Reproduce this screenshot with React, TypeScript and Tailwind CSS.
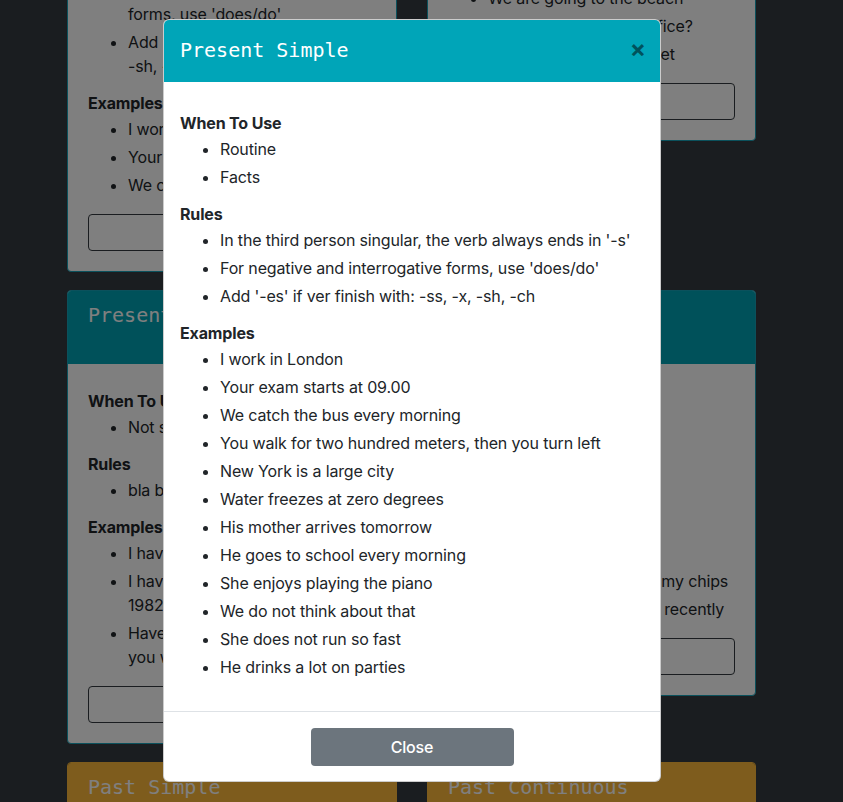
import React from "react";

type Card = {
  title: string;
  color: "info" | "warning";
  when?: React.ReactNode[];
  rules?: React.ReactNode[];
  examples?: React.ReactNode[];
  tight?: boolean;
};

const mono = "font-['DejaVu_Sans_Mono',monospace]";

function Section({ title, items, first }: { title: string; items: React.ReactNode[]; first?: boolean }) {
  return (
    <div className={first ? "" : "mt-[13px]"}>
      <div className="font-bold leading-6 mb-[2px]">{title}</div>
      <ul className="list-disc pl-10">
        {items.map((t, i) => (
          <li key={i} className="leading-6 mb-1">
            {t}
          </li>
        ))}
      </ul>
    </div>
  );
}

function BgCard({ card }: { card: Card }) {
  const info = card.color === "info";
  return (
    <div
      className={`self-start rounded border overflow-hidden bg-white ${
        info ? "border-[#17a2b8]" : "border-[#fcb83a]"
      }`}
    >
      <div className={`h-[73px] px-5 pt-3 ${info ? "bg-[#00a3b5]" : "bg-[#fcb83a]"}`}>
        <div className={`${mono} text-[20px] leading-6 tracking-normal text-white`}>{card.title}</div>
      </div>
      {card.when && (
        <div className={`px-5 pb-5 text-[#212529] ${card.tight ? "pt-[22px]" : "pt-[25px]"}`}>
          <Section title="When To Use" items={card.when} first />
          <Section title="Rules" items={card.rules || []} />
          <Section title="Examples" items={card.examples || []} />
          <button className="mt-[13px] w-full h-[37px] rounded border border-[#343a40] text-[#343a40]">
            Practice
          </button>
        </div>
      )}
    </div>
  );
}

const cards: Card[] = [
  {
    title: "Present Simple",
    color: "info",
    when: ["Routine", "Facts"],
    rules: [
      "In the third person singular, the verb always ends in '-s'",
      "For negative and interrogative forms, use 'does/do'",
      <>
        <span className="whitespace-nowrap">Add '-es' if ver finish with: -ss, -x,</span>
        <br />
        -sh, -ch
      </>,
    ],
    examples: ["I work in London", "Your exam starts at 09.00", "We catch the bus every morning"],
  },
  {
    title: "Present Continuous",
    color: "info",
    tight: true,
    when: ["Actions happening now", "Temporary actions"],
    rules: ["to be + verb-ing"],
    examples: ["We are going to the beach", "Are you going to the office?", "He's walking in the street"],
  },
  {
    title: "Present Perfect",
    color: "info",
    when: ["Not specific time"],
    rules: ["bla bla bla"],
    examples: [
      "I have been to London",
      <>
        I have lived in this city since
        <br />
        1982
      </>,
      "Have you ever seen the film that you wanted?",
    ],
  },
  {
    title: "Present Perfect Continuous",
    color: "info",
    when: ["Actions until now"],
    rules: ["have been + verb-ing"],
    examples: [
      "It has been raining",
      <span className="whitespace-nowrap">Who has been stealing my chips</span>,
      <span className="whitespace-nowrap">I've been watching you recently</span>,
    ],
  },
  { title: "Past Simple", color: "warning" },
  { title: "Past Continuous", color: "warning" },
];

const modalSections = [
  { title: "When To Use", items: ["Routine", "Facts"] },
  {
    title: "Rules",
    items: [
      "In the third person singular, the verb always ends in '-s'",
      "For negative and interrogative forms, use 'does/do'",
      "Add '-es' if ver finish with: -ss, -x, -sh, -ch",
    ],
  },
  {
    title: "Examples",
    items: [
      "I work in London",
      "Your exam starts at 09.00",
      "We catch the bus every morning",
      "You walk for two hundred meters, then you turn left",
      "New York is a large city",
      "Water freezes at zero degrees",
      "His mother arrives tomorrow",
      "He goes to school every morning",
      "She enjoys playing the piano",
      "We do not think about that",
      "She does not run so fast",
      "He drinks a lot on parties",
    ],
  },
];

export default function App() {
  return (
    <div className="relative h-[802px] w-full overflow-hidden bg-[#343a40] font-['Inter',sans-serif] text-base tracking-[-0.15px] text-[#212529]">
      <div className="-mt-[290px] pl-[67px] grid grid-cols-[330px_329px] gap-x-[30px] gap-y-[18px] items-start">
        {cards.map((c, i) => (
          <BgCard key={i} card={c} />
        ))}
      </div>

      <div className="absolute inset-0 bg-black/50" />

      <div className="absolute left-[163px] top-[19px] w-[498px] rounded-md border border-black/20 bg-white overflow-hidden">
        <div className="flex items-start justify-between bg-[#00a5b8] h-[62px] pl-4 pr-4 pt-[18px]">
          <div className={`${mono} text-[20px] leading-6 tracking-normal text-white`}>Present Simple</div>
          <span className="text-[24px] leading-6 font-bold text-black/50 -mr-[2px] -mt-[1px]">×</span>
        </div>
        <div className="px-4 pt-[29px] pb-[28px]">
          {modalSections.map((s, i) => (
            <Section key={i} title={s.title} items={s.items} first={i === 0} />
          ))}
        </div>
        <div className="border-t border-[#dee2e6] flex justify-center pt-4 pb-[15px]">
          <button className="w-[203px] h-[38px] rounded bg-[#6c757d] text-white font-medium">Close</button>
        </div>
      </div>
    </div>
  );
}
